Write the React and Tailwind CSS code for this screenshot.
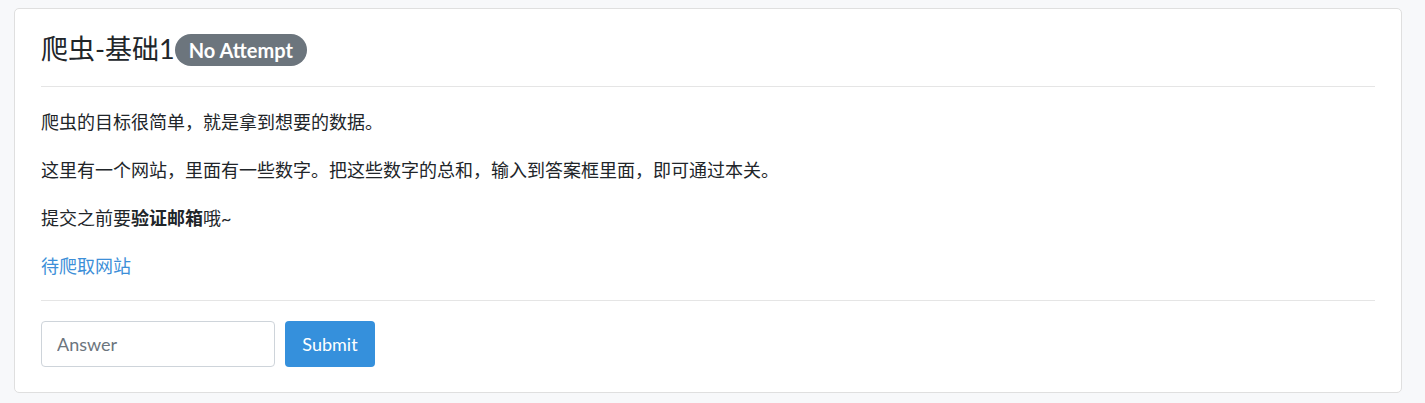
export default function App() {
  const font = { fontFamily: '"Lato", "Noto Sans CJK SC", sans-serif' };
  return (
    <div className="min-h-[403px] bg-[#f7f8fa] pt-[8px] pl-[14px] pr-[23px] pb-[11px]" style={font}>
      <div className="bg-white border border-[#dfdfdf] rounded-[5px] px-[26px] pb-[25px] text-[#212529]">
        <div className="pt-[25px] pb-[20px] border-b border-[#e5e5e5]">
          <div className="h-[32px] flex items-center">
            <span className="text-[27px] leading-none -mt-[3px]">爬虫-基础1</span>
            <span className="h-[32px] inline-flex items-center rounded-full bg-[#6c757d] text-white font-bold text-[20px] px-[14px]">No Attempt</span>
          </div>
        </div>
        <div className="pt-[23px] pb-[22px] border-b border-[#e5e5e5] text-[18px] leading-[24px]">
          <p className="h-[24px] mb-[24px]">爬虫的目标很简单，就是拿到想要的数据。</p>
          <p className="h-[24px] mb-[24px]">这里有一个网站，里面有一些数字。把这些数字的总和，输入到答案框里面，即可通过本关。</p>
          <p className="h-[24px] mb-[24px]">提交之前要<b className="font-bold">验证邮箱</b>哦~</p>
          <p className="h-[24px]"><a className="text-[#3d8fd8]" href="#">待爬取网站</a></p>
        </div>
        <div className="pt-[20px] flex gap-[10px]">
          <input
            className="w-[234px] h-[46px] border border-[#ced4da] rounded-[4px] px-[15px] text-[18px] placeholder-[#6c757d] outline-none"
            placeholder="Answer"
            style={font}
          />
          <button className="w-[90px] h-[46px] rounded-[4px] bg-[#3590dc] text-white text-[18px]" style={font}>Submit</button>
        </div>
      </div>
    </div>
  );
}
